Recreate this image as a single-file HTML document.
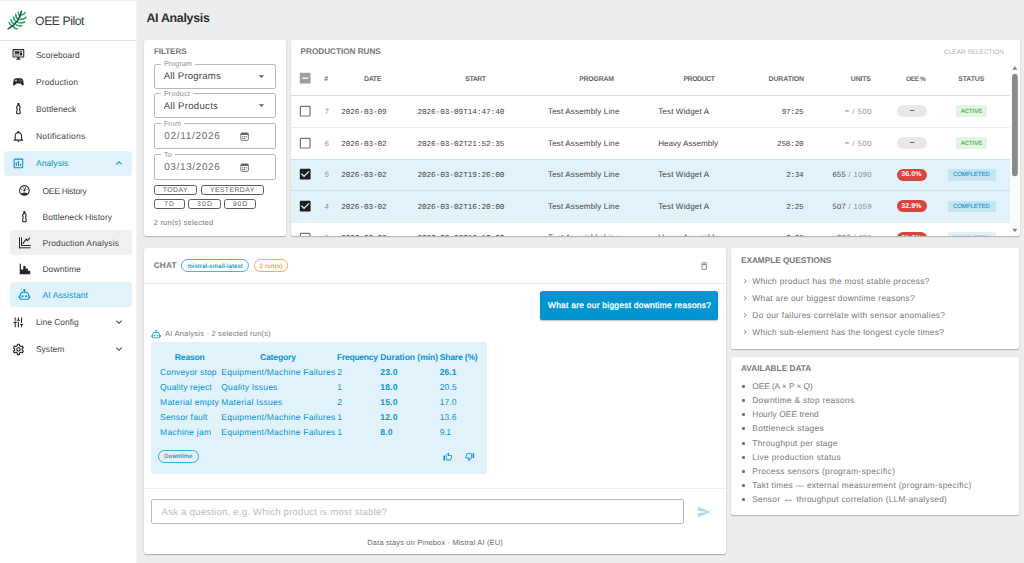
<!DOCTYPE html><html lang="en"><head><meta charset="utf-8"><title>OEE Pilot - AI Analysis</title><style>

*{box-sizing:border-box;margin:0;padding:0}
html,body{width:1024px;height:563px;overflow:hidden;background:#ededed}
body{font-family:"Liberation Sans",sans-serif;position:relative;text-rendering:geometricPrecision}
#app{position:absolute;left:0;top:0;width:1024px;height:563px;overflow:hidden;background:#ededed}
.b{position:absolute}
.i{position:absolute;display:block;overflow:visible}
.t{position:absolute;white-space:nowrap;line-height:1;font-weight:400}
.m{font-family:"Liberation Mono",monospace}
.card{background:#fff;border-radius:2.2px;box-shadow:0 1px 1.3px rgba(0,0,0,.27),0 0 .8px rgba(0,0,0,.07)}

</style></head><body><div id="app">
<nav class="b" style="left:0;top:0;width:137px;height:563px;background:#fff;border-right:1px solid #f4f4f4">
<div class="b" style="left:0;top:0;width:136px;height:1px;background:#f1f1f1"></div>
<div class="b" style="left:0;top:40px;width:136px;height:1px;background:#e2e2e2"></div>
<svg class="i" style="left:0;top:0;width:34px;height:34px" viewBox="0 0 34 34" fill="none" stroke-linecap="round">
<g stroke="#2daa6a" stroke-width="1.6">
<path d="M18.3 12.2Q18.4 15 20.2 16.3"/><path d="M15.7 14.4Q15.9 18.2 18.8 19.8"/><path d="M13.6 17Q13.9 20.6 17 22.2"/><path d="M11 19.5Q11.5 23 14.8 24.3"/><path d="M9.1 22.5Q9.8 25.2 12.6 26"/>
<path d="M21 15Q24.2 14.8 25.1 12.5"/><path d="M20.3 19.4Q23.8 19.6 25.9 17.4"/><path d="M18.6 22.5Q21.8 23.4 24.7 22.1"/><path d="M16.4 24.9Q19 26.4 21.9 25.7"/><path d="M13.3 26.7Q14.8 28.6 17.2 28.9"/>
</g>
<path d="M8.05 28.9C13 26.4 19.4 21.8 21.5 11.2" stroke="#2e3d55" stroke-width="1.45"/>
</svg>
<span class="t" style="left:35.10px;top:15px;font-size:12.2px;color:#3a3a3a;letter-spacing:-0.443px;">OEE Pilot</span>
<svg class="i" style="left:12.10px;top:48.00px;width:12.80px;height:12.80px;" viewBox="0 0 24 24"><path fill="#262626" d="M21,16V4H3V16H21M21,2A2,2 0 0,1 23,4V16A2,2 0 0,1 21,18H14V20H16V22H8V20H10V18H3C1.89,18 1,17.1 1,16V4C1,2.89 1.89,2 3,2H21M5,6H14V11H5V6M15,6H19V8H15V6M19,9V14H15V9H19M5,12H9V14H5V12M10,12H14V14H10V12Z"/></svg>
<span class="t" style="left:35.90px;top:51px;font-size:8.53px;color:#474747;letter-spacing:-0.010px;">Scoreboard</span>
<svg class="i" style="left:12.10px;top:75.20px;width:12.80px;height:12.80px;" viewBox="0 0 24 24"><path fill="#262626" d="M7.97,16L5,19C4.67,19.3 4.23,19.5 3.75,19.5A1.75,1.75 0 0,1 2,17.75V17.5L3,10.12C3.21,7.81 5.14,6 7.5,6H16.5C18.86,6 20.79,7.81 21,10.12L22,17.5V17.75A1.75,1.75 0 0,1 20.25,19.5C19.77,19.5 19.33,19.3 19,19L16.03,16H7.97M7,8V10H5V11H7V13H8V11H10V10H8V8H7M16.5,8A0.75,0.75 0 0,0 15.75,8.75A0.75,0.75 0 0,0 16.5,9.5A0.75,0.75 0 0,0 17.25,8.75A0.75,0.75 0 0,0 16.5,8M14.75,9.75A0.75,0.75 0 0,0 14,10.5A0.75,0.75 0 0,0 14.75,11.25A0.75,0.75 0 0,0 15.5,10.5A0.75,0.75 0 0,0 14.75,9.75M18.25,9.75A0.75,0.75 0 0,0 17.5,10.5A0.75,0.75 0 0,0 18.25,11.25A0.75,0.75 0 0,0 19,10.5A0.75,0.75 0 0,0 18.25,9.75M16.5,11.5A0.75,0.75 0 0,0 15.75,12.25A0.75,0.75 0 0,0 16.5,13A0.75,0.75 0 0,0 17.25,12.25A0.75,0.75 0 0,0 16.5,11.5Z"/></svg>
<span class="t" style="left:35.90px;top:78px;font-size:8.53px;color:#474747;letter-spacing:0.158px;">Production</span>
<svg class="i" style="left:12.10px;top:102.40px;width:12.80px;height:12.80px;" viewBox="0 0 24 24"><path fill-rule="evenodd" fill="#262626" d="M10.2,1.8H13.8V4.4C13.8,6.5 16.3,7.5 16.3,10.2C16.3,12 15.3,12.8 15.3,14.2C15.3,15.6 16.3,16.4 16.3,18V21A2,2 0 0 1 14.3,23H9.7A2,2 0 0 1 7.7,21V18C7.7,16.4 8.7,15.6 8.7,14.2C8.7,12.8 7.7,12 7.7,10.2C7.7,7.5 10.2,6.5 10.2,4.4ZM11.6,6.8H12.4C12.9,7.9 14.2,8.7 14.2,10.2C14.2,11.6 13.2,12.6 13.2,14.2C13.2,15.8 14.2,16.6 14.2,18V20.9H9.8V18C9.8,16.6 10.8,15.8 10.8,14.2C10.8,12.6 9.8,11.6 9.8,10.2C9.8,8.7 11.1,7.9 11.6,6.8Z"/></svg>
<span class="t" style="left:35.90px;top:105px;font-size:8.53px;color:#474747;letter-spacing:0.077px;">Bottleneck</span>
<svg class="i" style="left:12.10px;top:129.60px;width:12.80px;height:12.80px;" viewBox="0 0 24 24"><path fill="#262626" d="M10,21H14A2,2 0 0,1 12,23A2,2 0 0,1 10,21M21,19V20H3V19L5,17V11C5,7.9 7.03,5.17 10,4.29C10,4.19 10,4.1 10,4A2,2 0 0,1 12,2A2,2 0 0,1 14,4C14,4.1 14,4.19 14,4.29C16.97,5.17 19,7.9 19,11V17L21,19M17,11A5,5 0 0,0 12,6A5,5 0 0,0 7,11V18H17V11Z"/></svg>
<span class="t" style="left:35.90px;top:132px;font-size:8.53px;color:#474747;letter-spacing:0.256px;">Notifications</span>
<div class="b" style="left:3.80px;top:150.80px;width:128.20px;height:24.80px;background:#e1f2fa;border-radius:4px"></div>
<svg class="i" style="left:12.10px;top:156.80px;width:12.80px;height:12.80px;" viewBox="0 0 24 24"><path fill="#0394d2" d="M9,17H7V10H9V17M13,17H11V7H13V17M17,17H15V13H17V17M19,19H5V5H19V19.1M19,3H5C3.9,3 3,3.9 3,5V19C3,20.1 3.9,21 5,21H19C20.1,21 21,20.1 21,19V5C21,3.9 20.1,3 19,3Z"/></svg>
<span class="t" style="left:35.90px;top:159px;font-size:8.53px;color:#0394d2;letter-spacing:0.107px;">Analysis</span>
<svg class="i" style="left:112.90px;top:157.20px;width:12.00px;height:12.00px;" viewBox="0 0 24 24"><path fill="#0394d2" d="M7.41,15.41L12,10.83L16.59,15.41L18,14L12,8L6,14L7.41,15.41Z"/></svg>
<svg class="i" style="left:18.30px;top:184.40px;width:12.80px;height:12.80px;" viewBox="0 0 24 24"><path fill="#262626" d="M12,2A10,10 0 0,0 2,12A10,10 0 0,0 12,22A10,10 0 0,0 22,12A10,10 0 0,0 12,2M12,4A8,8 0 0,1 20,12C20,14.4 19,16.5 17.3,18C15.9,16.7 14,16 12,16C10,16 8.2,16.7 6.7,18C5,16.5 4,14.4 4,12A8,8 0 0,1 12,4M14,5.89C13.62,5.9 13.26,6.15 13.1,6.54L11.81,9.77L11.71,10C11,10.13 10.41,10.6 10.14,11.26C9.73,12.29 10.23,13.45 11.26,13.86C12.29,14.27 13.45,13.77 13.86,12.74C14.12,12.08 14,11.32 13.57,10.76L13.67,10.5L14.96,7.29L14.97,7.26C15.17,6.75 14.92,6.17 14.41,5.96C14.28,5.91 14.15,5.89 14,5.89M10,6A1,1 0 0,0 9,7A1,1 0 0,0 10,8A1,1 0 0,0 11,7A1,1 0 0,0 10,6M7,9A1,1 0 0,0 6,10A1,1 0 0,0 7,11A1,1 0 0,0 8,10A1,1 0 0,0 7,9M17,9A1,1 0 0,0 16,10A1,1 0 0,0 17,11A1,1 0 0,0 18,10A1,1 0 0,0 17,9Z"/></svg>
<span class="t" style="left:42.40px;top:187px;font-size:8.53px;color:#474747;letter-spacing:-0.249px;">OEE History</span>
<svg class="i" style="left:18.30px;top:210.30px;width:12.80px;height:12.80px;" viewBox="0 0 24 24"><path fill-rule="evenodd" fill="#262626" d="M10.2,1.8H13.8V4.4C13.8,6.5 16.3,7.5 16.3,10.2C16.3,12 15.3,12.8 15.3,14.2C15.3,15.6 16.3,16.4 16.3,18V21A2,2 0 0 1 14.3,23H9.7A2,2 0 0 1 7.7,21V18C7.7,16.4 8.7,15.6 8.7,14.2C8.7,12.8 7.7,12 7.7,10.2C7.7,7.5 10.2,6.5 10.2,4.4ZM11.6,6.8H12.4C12.9,7.9 14.2,8.7 14.2,10.2C14.2,11.6 13.2,12.6 13.2,14.2C13.2,15.8 14.2,16.6 14.2,18V20.9H9.8V18C9.8,16.6 10.8,15.8 10.8,14.2C10.8,12.6 9.8,11.6 9.8,10.2C9.8,8.7 11.1,7.9 11.6,6.8Z"/></svg>
<span class="t" style="left:42.40px;top:213px;font-size:8.53px;color:#474747;letter-spacing:0.061px;">Bottleneck History</span>
<div class="b" style="left:9.80px;top:230.20px;width:122.20px;height:24.80px;background:#f0f0f0;border-radius:4px"></div>
<svg class="i" style="left:18px;top:236px;width:14px;height:14px" viewBox="18 236 14 14"><g fill="#262626"><rect x="19" y="237.3" width="1" height="11"/><rect x="21" y="237.3" width="1" height="8.7"/><rect x="21" y="245" width="9.6" height="1"/><rect x="19" y="247.3" width="11.6" height="1"/></g><path d="M22.6,243.9L26.2,239.2L27.4,240.6L29.9,237.8" fill="none" stroke="#262626" stroke-width="1.15"/></svg>
<span class="t" style="left:42.40px;top:239px;font-size:8.53px;color:#474747;letter-spacing:0.125px;">Production Analysis</span>
<svg class="i" style="left:17.70px;top:261.50px;width:14.00px;height:14.00px;" viewBox="0 0 24 24"><path fill="#262626" d="M3,3H5V13H9V7H13V11H17V15H21V21H3V3Z"/></svg>
<span class="t" style="left:42.40px;top:265px;font-size:8.53px;color:#474747;letter-spacing:0.082px;">Downtime</span>
<div class="b" style="left:9.80px;top:282.00px;width:122.20px;height:24.80px;background:#e1f2fa;border-radius:4px"></div>
<svg class="i" style="left:18.30px;top:288.00px;width:12.80px;height:12.80px;" viewBox="0 0 24 24"><path fill="#0394d2" d="M17.5,15.5C17.5,16.61 16.61,17.5 15.5,17.5C14.39,17.5 13.5,16.61 13.5,15.5C13.5,14.39 14.4,13.5 15.5,13.5C16.6,13.5 17.5,14.4 17.5,15.5M8.5,13.5C7.4,13.5 6.5,14.4 6.5,15.5C6.5,16.6 7.4,17.5 8.5,17.5C9.6,17.5 10.5,16.61 10.5,15.5C10.5,14.39 9.61,13.5 8.5,13.5M23,15V18C23,18.55 22.55,19 22,19H21V20C21,21.11 20.11,22 19,22H5C3.9,22 3,21.11 3,20V19H2C1.45,19 1,18.55 1,18V15C1,14.45 1.45,14 2,14H3C3,10.13 6.13,7 10,7H11V5.73C10.4,5.39 10,4.74 10,4C10,2.9 10.9,2 12,2C13.1,2 14,2.9 14,4C14,4.74 13.6,5.39 13,5.73V7H14C17.87,7 21,10.13 21,14H22C22.55,14 23,14.45 23,15M21,16H19V14C19,11.24 16.76,9 14,9H10C7.24,9 5,11.24 5,14V16H3V17H5V20H19V17H21V16Z"/></svg>
<span class="t" style="left:42.40px;top:291px;font-size:8.53px;color:#0394d2;letter-spacing:0.098px;">AI Assistant</span>
<svg class="i" style="left:12.10px;top:315.60px;width:12.80px;height:12.80px;" viewBox="0 0 24 24"><path fill="#262626" d="M5,3H7V9H5ZM3,11H9V13H7V21H5V13H3ZM11,3H13V7H15V9H9V7H11ZM11,11H13V21H11ZM17,3H19V13H17ZM15,15H21V17H19V21H17V17H15Z"/></svg>
<span class="t" style="left:35.90px;top:318px;font-size:8.53px;color:#474747;letter-spacing:-0.035px;">Line Config</span>
<svg class="i" style="left:112.90px;top:316.00px;width:12.00px;height:12.00px;" viewBox="0 0 24 24"><path fill="#4c4c4c" d="M7.41,8.58L12,13.17L16.59,8.58L18,10L12,16L6,10L7.41,8.58Z"/></svg>
<svg class="i" style="left:12.10px;top:342.90px;width:12.80px;height:12.80px;" viewBox="0 0 24 24"><path d="M14.19,5.25L13.89,2.28L10.11,2.28L9.81,5.25L7.25,6.72L4.53,5.51L2.64,8.78L5.06,10.52L5.06,13.48L2.64,15.22L4.53,18.49L7.25,17.28L9.81,18.75L10.11,21.72L13.89,21.72L14.19,18.75L16.75,17.28L19.47,18.49L21.36,15.22L18.94,13.48L18.94,10.52L21.36,8.78L19.47,5.51L16.75,6.72Z" fill="none" stroke="#262626" stroke-width="2.05" stroke-linejoin="round"/><circle cx="12" cy="12" r="3.1" fill="none" stroke="#262626" stroke-width="2.05"/></svg>
<span class="t" style="left:35.90px;top:345px;font-size:8.53px;color:#474747;letter-spacing:0.021px;">System</span>
<svg class="i" style="left:112.90px;top:343.30px;width:12.00px;height:12.00px;" viewBox="0 0 24 24"><path fill="#4c4c4c" d="M7.41,8.58L12,13.17L16.59,8.58L18,10L12,16L6,10L7.41,8.58Z"/></svg>
</nav>
<main>
<span class="t" style="left:146.40px;top:12px;font-size:12.4px;color:#2f2f2f;font-weight:700;letter-spacing:-0.295px;">AI Analysis</span>
<div class="b card" style="left:144.00px;top:40.20px;width:142.10px;height:195.60px;"></div>
<span class="t" style="left:153.90px;top:48px;font-size:8.1px;color:#787878;font-weight:700;letter-spacing:-0.071px;">FILTERS</span>
<div class="b" style="left:154.00px;top:64.00px;width:121.60px;height:25.00px;border:1px solid #b9b9b9;border-radius:2.2px"></div>
<div class="b" style="left:161.00px;top:63.00px;width:34.10px;height:3.00px;background:#fff"></div>
<span class="t" style="left:163.90px;top:60px;font-size:7.2px;color:#8c8c8c;letter-spacing:0.088px;">Program</span>
<div class="b" style="left:154.00px;top:93.00px;width:121.60px;height:25.00px;border:1px solid #b9b9b9;border-radius:2.2px"></div>
<div class="b" style="left:161.00px;top:92.00px;width:31.90px;height:3.00px;background:#fff"></div>
<span class="t" style="left:163.90px;top:90px;font-size:7.2px;color:#8c8c8c;letter-spacing:0.188px;">Product</span>
<div class="b" style="left:154.00px;top:123.00px;width:121.60px;height:26.00px;border:1px solid #b9b9b9;border-radius:2.2px"></div>
<div class="b" style="left:161.00px;top:122.00px;width:23.00px;height:3.00px;background:#fff"></div>
<span class="t" style="left:163.90px;top:120px;font-size:7.2px;color:#8c8c8c;letter-spacing:0.073px;">From</span>
<div class="b" style="left:154.00px;top:154.00px;width:121.60px;height:26.00px;border:1px solid #b9b9b9;border-radius:2.2px"></div>
<div class="b" style="left:161.00px;top:153.00px;width:13.80px;height:3.00px;background:#fff"></div>
<span class="t" style="left:163.90px;top:151px;font-size:7.2px;color:#8c8c8c;letter-spacing:0.208px;">To</span>
<span class="t" style="left:163.70px;top:72px;font-size:9.6px;color:#454545;letter-spacing:0.199px;">All Programs</span>
<span class="t" style="left:163.70px;top:102px;font-size:9.6px;color:#454545;letter-spacing:0.274px;">All Products</span>
<svg class="i" style="left:254.50px;top:69.70px;width:12.80px;height:12.80px;" viewBox="0 0 24 24"><path fill="#5f5f5f" d="M7,10L12,15L17,10H7Z"/></svg>
<svg class="i" style="left:254.50px;top:99.30px;width:12.80px;height:12.80px;" viewBox="0 0 24 24"><path fill="#5f5f5f" d="M7,10L12,15L17,10H7Z"/></svg>
<span class="t" style="left:164.20px;top:132px;font-size:10.0px;color:#6d6d6d;letter-spacing:0.706px;">02/11/2026</span>
<span class="t" style="left:164.20px;top:163px;font-size:10.0px;color:#6d6d6d;letter-spacing:0.624px;">03/13/2026</span>
<svg class="i" style="left:240px;top:131.80px;width:9.2px;height:9.2px" viewBox="0 0 18 18"><rect x="1.6" y="1.8" width="14.8" height="14.6" rx="2.6" fill="none" stroke="#666" stroke-width="1.7"/><rect x="1.6" y="1.8" width="14.8" height="4.2" rx="1.6" fill="#666"/><rect x="4.3" y="8.3" width="2.4" height="2.2" fill="#666"/><rect x="7.8" y="8.3" width="2.4" height="2.2" fill="#666"/><rect x="11.3" y="8.3" width="2.4" height="2.2" fill="#666"/><rect x="4.3" y="11.8" width="2.4" height="2.2" fill="#666"/><rect x="7.8" y="11.8" width="2.4" height="2.2" fill="#666"/></svg>
<svg class="i" style="left:240px;top:162.60px;width:9.2px;height:9.2px" viewBox="0 0 18 18"><rect x="1.6" y="1.8" width="14.8" height="14.6" rx="2.6" fill="none" stroke="#666" stroke-width="1.7"/><rect x="1.6" y="1.8" width="14.8" height="4.2" rx="1.6" fill="#666"/><rect x="4.3" y="8.3" width="2.4" height="2.2" fill="#666"/><rect x="7.8" y="8.3" width="2.4" height="2.2" fill="#666"/><rect x="11.3" y="8.3" width="2.4" height="2.2" fill="#666"/><rect x="4.3" y="11.8" width="2.4" height="2.2" fill="#666"/><rect x="7.8" y="11.8" width="2.4" height="2.2" fill="#666"/></svg>
<div class="b" style="left:153.50px;top:185.00px;width:43.60px;height:10.00px;border:1px solid #5c5c5c;border-radius:2.6px"></div>
<span class="t" style="left:162.65px;top:188px;font-size:6.9px;color:#606060;letter-spacing:0.449px;">TODAY</span>
<div class="b" style="left:200.80px;top:185.00px;width:63.00px;height:10.00px;border:1px solid #5c5c5c;border-radius:2.6px"></div>
<span class="t" style="left:209.90px;top:188px;font-size:6.9px;color:#606060;letter-spacing:0.396px;">YESTERDAY</span>
<div class="b" style="left:153.50px;top:199.00px;width:31.20px;height:10.00px;border:1px solid #5c5c5c;border-radius:2.6px"></div>
<span class="t" style="left:164.30px;top:202px;font-size:6.9px;color:#606060;letter-spacing:0.768px;">7D</span>
<div class="b" style="left:188.30px;top:199.00px;width:32.30px;height:10.00px;border:1px solid #5c5c5c;border-radius:2.6px"></div>
<span class="t" style="left:196.95px;top:202px;font-size:6.9px;color:#606060;letter-spacing:1.168px;">30D</span>
<div class="b" style="left:224.20px;top:199.00px;width:31.80px;height:10.00px;border:1px solid #5c5c5c;border-radius:2.6px"></div>
<span class="t" style="left:232.90px;top:202px;font-size:6.9px;color:#606060;letter-spacing:0.868px;">90D</span>
<span class="t" style="left:153.70px;top:219px;font-size:7.47px;color:#777;letter-spacing:0.233px;">2 run(s) selected</span>
<section class="b card" style="left:291px;top:40.2px;width:728.5px;height:195.6px;overflow:hidden">
</section>
<span class="t" style="left:300.60px;top:48px;font-size:8.2px;color:#787878;font-weight:700;letter-spacing:-0.025px;">PRODUCTION RUNS</span>
<span class="t" style="left:944.10px;top:50px;font-size:6.4px;color:#b3b3b3;letter-spacing:0.036px;">CLEAR SELECTION</span>
<div class="b" style="left:291px;top:62px;width:728.5px;height:173.8px;overflow:hidden;border-radius:0 0 2.2px 2.2px">
<div class="b" style="left:0.00px;top:97.00px;width:719.10px;height:63.00px;background:#e1f2fa"></div>
<div class="b" style="left:0.00px;top:32.80px;width:719.10px;height:1.00px;background:#dcdcdc"></div>
<div class="b" style="left:0.00px;top:65.00px;width:719.10px;height:1.00px;background:rgba(0,0,0,.075)"></div>
<div class="b" style="left:0.00px;top:97.00px;width:719.10px;height:1.00px;background:rgba(0,0,0,.075)"></div>
<div class="b" style="left:0.00px;top:128.00px;width:719.10px;height:1.00px;background:rgba(0,0,0,.075)"></div>
<div class="b" style="left:0.00px;top:160.00px;width:719.10px;height:1.00px;background:rgba(0,0,0,.075)"></div>
</div>
<span class="t" style="left:324.20px;top:77px;font-size:6.9px;color:#666;font-weight:700;">#</span>
<span class="t" style="left:364.10px;top:77px;font-size:6.9px;color:#666;font-weight:700;letter-spacing:-0.350px;">DATE</span>
<span class="t" style="left:465.30px;top:77px;font-size:6.9px;color:#666;font-weight:700;letter-spacing:-0.436px;">START</span>
<span class="t" style="left:579.20px;top:77px;font-size:6.9px;color:#666;font-weight:700;letter-spacing:-0.207px;">PROGRAM</span>
<span class="t" style="left:683.40px;top:77px;font-size:6.9px;color:#666;font-weight:700;letter-spacing:-0.410px;">PRODUCT</span>
<span class="t" style="left:768.50px;top:77px;font-size:6.9px;color:#666;font-weight:700;letter-spacing:-0.039px;">DURATION</span>
<span class="t" style="left:850.80px;top:77px;font-size:6.9px;color:#666;font-weight:700;letter-spacing:-0.144px;">UNITS</span>
<span class="t" style="left:906.00px;top:77px;font-size:6.5px;color:#666;font-weight:700;letter-spacing:-0.358px;">OEE %</span>
<span class="t" style="left:958.20px;top:77px;font-size:6.9px;color:#666;font-weight:700;letter-spacing:-0.088px;">STATUS</span>
<svg class="i" style="left:298.30px;top:71.30px;width:14.40px;height:14.40px;" viewBox="0 0 24 24"><path fill="#9e9e9e" d="M17,13H7V11H17M19,3H5C3.89,3 3,3.89 3,5V19A2,2 0 0,0 5,21H19A2,2 0 0,0 21,19V5C21,3.89 20.1,3 19,3Z"/></svg>
<div class="b" style="left:291px;top:62px;width:728.5px;height:173.8px;overflow:hidden">
<div class="b" style="left:-291px;top:-62px;width:1024px;height:563px">
<svg class="i" style="left:298.30px;top:104.00px;width:14.40px;height:14.40px;" viewBox="0 0 24 24"><path fill="#747474" d="M19,3H5C3.89,3 3,3.89 3,5V19A2,2 0 0,0 5,21H19A2,2 0 0,0 21,19V5C21,3.89 20.1,3 19,3M19,5V19H5V5H19Z"/></svg>
<span class="t" style="left:324.70px;top:108px;font-size:7.47px;color:#909090;">7</span>
<span class="t m" style="left:341.30px;top:110px;font-size:7.73px;color:#444;letter-spacing:-0.110px;">2026-03-09</span>
<span class="t m" style="left:417.40px;top:110px;font-size:7.73px;color:#444;letter-spacing:-0.054px;">2026-03-09T14:47:40</span>
<span class="t" style="left:548.00px;top:108px;font-size:8.1px;color:#444;letter-spacing:0.131px;">Test Assembly Line</span>
<span class="t" style="left:658.20px;top:108px;font-size:8.1px;color:#444;letter-spacing:0.118px;">Test Widget A</span>
<span class="t m" style="left:781.64px;top:110px;font-size:7.73px;color:#444;letter-spacing:-0.267px;">97:25</span>
<span class="t" style="left:844.90px;top:108px;font-size:7.6px;color:#8c8c8c;letter-spacing:0.567px;"><b style="position:relative;top:-1px;font-weight:700;color:#555">–</b> / 500</span>
<div class="b" style="left:896.90px;top:105.10px;width:30.00px;height:12.20px;background:#e9e9e9;border-radius:6.1px"></div>
<span class="t" style="left:909.40px;top:106px;font-size:9.0px;color:#5a5a5a;font-weight:700;">–</span>
<div class="b" style="left:956.20px;top:105.20px;width:30.90px;height:12.20px;background:#e3f3e4;border-radius:2px"></div>
<span class="t" style="left:960.85px;top:109px;font-size:6.0px;color:#4caf50;letter-spacing:-0.034px;-webkit-text-stroke:.14px #4caf50;">ACTIVE</span>
<svg class="i" style="left:298.30px;top:135.90px;width:14.40px;height:14.40px;" viewBox="0 0 24 24"><path fill="#747474" d="M19,3H5C3.89,3 3,3.89 3,5V19A2,2 0 0,0 5,21H19A2,2 0 0,0 21,19V5C21,3.89 20.1,3 19,3M19,5V19H5V5H19Z"/></svg>
<span class="t" style="left:324.70px;top:140px;font-size:7.47px;color:#909090;">6</span>
<span class="t m" style="left:341.30px;top:142px;font-size:7.73px;color:#444;letter-spacing:-0.110px;">2026-03-02</span>
<span class="t m" style="left:417.40px;top:142px;font-size:7.73px;color:#444;letter-spacing:-0.054px;">2026-03-02T21:52:35</span>
<span class="t" style="left:548.00px;top:140px;font-size:8.1px;color:#444;letter-spacing:0.131px;">Test Assembly Line</span>
<span class="t" style="left:658.20px;top:140px;font-size:8.1px;color:#444;letter-spacing:0.009px;">Heavy Assembly</span>
<span class="t m" style="left:777.00px;top:142px;font-size:7.73px;color:#444;letter-spacing:-0.212px;">258:20</span>
<span class="t" style="left:844.90px;top:140px;font-size:7.6px;color:#8c8c8c;letter-spacing:0.567px;"><b style="position:relative;top:-1px;font-weight:700;color:#555">–</b> / 500</span>
<div class="b" style="left:896.90px;top:137.00px;width:30.00px;height:12.20px;background:#e9e9e9;border-radius:6.1px"></div>
<span class="t" style="left:909.40px;top:138px;font-size:9.0px;color:#5a5a5a;font-weight:700;">–</span>
<div class="b" style="left:956.20px;top:137.10px;width:30.90px;height:12.20px;background:#e3f3e4;border-radius:2px"></div>
<span class="t" style="left:960.85px;top:141px;font-size:6.0px;color:#4caf50;letter-spacing:-0.034px;-webkit-text-stroke:.14px #4caf50;">ACTIVE</span>
<svg class="i" style="left:298.30px;top:167.40px;width:14.40px;height:14.40px;" viewBox="0 0 24 24"><path fill="#1f1f1f" d="M10,17L5,12L6.41,10.58L10,14.17L17.59,6.58L19,8M19,3H5C3.89,3 3,3.89 3,5V19A2,2 0 0,0 5,21H19A2,2 0 0,0 21,19V5C21,3.89 20.1,3 19,3Z"/></svg>
<span class="t" style="left:324.70px;top:171px;font-size:7.47px;color:#909090;">5</span>
<span class="t m" style="left:341.30px;top:173px;font-size:7.73px;color:#444;letter-spacing:-0.110px;">2026-03-02</span>
<span class="t m" style="left:417.40px;top:173px;font-size:7.73px;color:#444;letter-spacing:-0.054px;">2026-03-02T19:26:00</span>
<span class="t" style="left:548.00px;top:171px;font-size:8.1px;color:#444;letter-spacing:0.131px;">Test Assembly Line</span>
<span class="t" style="left:658.20px;top:171px;font-size:8.1px;color:#444;letter-spacing:0.118px;">Test Widget A</span>
<span class="t m" style="left:786.28px;top:173px;font-size:7.73px;color:#444;letter-spacing:-0.359px;">2:34</span>
<span class="t" style="left:832.40px;top:171px;font-size:7.6px;color:#8c8c8c;letter-spacing:0.359px;"><b style="font-weight:400;color:#444">655</b> / 1090</span>
<div class="b" style="left:896.90px;top:168.50px;width:30.00px;height:12.20px;background:#d8453a;border-radius:6.1px"></div>
<span class="t" style="left:901.25px;top:171px;font-size:7.0px;color:#fff;font-weight:700;letter-spacing:0.069px;">36.0%</span>
<div class="b" style="left:948.00px;top:169.00px;width:47.50px;height:11.80px;background:#c5e4f4;border-radius:2px"></div>
<span class="t" style="left:953.05px;top:172px;font-size:6.0px;color:#1f97d4;letter-spacing:-0.113px;-webkit-text-stroke:.14px #1f97d4;">COMPLETED</span>
<svg class="i" style="left:298.30px;top:199.00px;width:14.40px;height:14.40px;" viewBox="0 0 24 24"><path fill="#1f1f1f" d="M10,17L5,12L6.41,10.58L10,14.17L17.59,6.58L19,8M19,3H5C3.89,3 3,3.89 3,5V19A2,2 0 0,0 5,21H19A2,2 0 0,0 21,19V5C21,3.89 20.1,3 19,3Z"/></svg>
<span class="t" style="left:324.70px;top:203px;font-size:7.47px;color:#909090;">4</span>
<span class="t m" style="left:341.30px;top:205px;font-size:7.73px;color:#444;letter-spacing:-0.110px;">2026-03-02</span>
<span class="t m" style="left:417.40px;top:205px;font-size:7.73px;color:#444;letter-spacing:-0.054px;">2026-03-02T16:20:00</span>
<span class="t" style="left:548.00px;top:203px;font-size:8.1px;color:#444;letter-spacing:0.131px;">Test Assembly Line</span>
<span class="t" style="left:658.20px;top:203px;font-size:8.1px;color:#444;letter-spacing:0.118px;">Test Widget A</span>
<span class="t m" style="left:786.28px;top:205px;font-size:7.73px;color:#444;letter-spacing:-0.359px;">2:25</span>
<span class="t" style="left:832.40px;top:203px;font-size:7.6px;color:#8c8c8c;letter-spacing:0.359px;"><b style="font-weight:400;color:#444">507</b> / 1059</span>
<div class="b" style="left:896.90px;top:200.10px;width:30.00px;height:12.20px;background:#d8453a;border-radius:6.1px"></div>
<span class="t" style="left:901.25px;top:203px;font-size:7.0px;color:#fff;font-weight:700;letter-spacing:0.069px;">32.9%</span>
<div class="b" style="left:948.00px;top:200.60px;width:47.50px;height:11.80px;background:#c5e4f4;border-radius:2px"></div>
<span class="t" style="left:953.05px;top:204px;font-size:6.0px;color:#1f97d4;letter-spacing:-0.113px;-webkit-text-stroke:.14px #1f97d4;">COMPLETED</span>
<svg class="i" style="left:298.30px;top:230.50px;width:14.40px;height:14.40px;" viewBox="0 0 24 24"><path fill="#747474" d="M19,3H5C3.89,3 3,3.89 3,5V19A2,2 0 0,0 5,21H19A2,2 0 0,0 21,19V5C21,3.89 20.1,3 19,3M19,5V19H5V5H19Z"/></svg>
<span class="t" style="left:324.70px;top:234px;font-size:7.47px;color:#909090;">3</span>
<span class="t m" style="left:341.30px;top:236px;font-size:7.73px;color:#444;letter-spacing:-0.110px;">2026-03-02</span>
<span class="t m" style="left:417.40px;top:236px;font-size:7.73px;color:#444;letter-spacing:-0.054px;">2026-03-02T13:16:00</span>
<span class="t" style="left:548.00px;top:234px;font-size:8.1px;color:#444;letter-spacing:0.131px;">Test Assembly Line</span>
<span class="t" style="left:658.20px;top:234px;font-size:8.1px;color:#444;letter-spacing:0.009px;">Heavy Assembly</span>
<span class="t m" style="left:786.28px;top:236px;font-size:7.73px;color:#444;letter-spacing:-0.359px;">0:28</span>
<span class="t" style="left:836.90px;top:234px;font-size:7.6px;color:#8c8c8c;letter-spacing:0.369px;"><b style="font-weight:400;color:#444">207</b> / 421</span>
<div class="b" style="left:896.90px;top:231.60px;width:30.00px;height:12.20px;background:#d8453a;border-radius:6.1px"></div>
<span class="t" style="left:901.25px;top:235px;font-size:7.0px;color:#fff;font-weight:700;letter-spacing:0.069px;">31.6%</span>
<div class="b" style="left:948.00px;top:232.10px;width:47.50px;height:11.80px;background:#dff0f9;border-radius:2px"></div>
<span class="t" style="left:953.05px;top:236px;font-size:6.0px;color:#1f97d4;letter-spacing:-0.113px;-webkit-text-stroke:.14px #1f97d4;">COMPLETED</span>
</div></div>
<div class="b" style="left:1010.10px;top:62.00px;width:9.40px;height:173.80px;background:#fcfcfc;border-radius:0 0 2.2px 0"></div>
<svg class="i" style="left:1010.1px;top:62px;width:9.4px;height:173.8px" viewBox="0 0 9.4 173.8"><path d="M2.3 7.7L4.85 3.9L7.4 7.7Z" fill="#858585"/><path d="M2.3 166.9L4.85 170.4L7.4 166.9Z" fill="#858585"/><rect x="2.0" y="11.7" width="5.8" height="102.6" rx="2.9" fill="#8a8a8a"/></svg>
<section class="b card" style="left:144px;top:248.2px;width:581.7px;height:305.6px"></section>
<span class="t" style="left:153.70px;top:262px;font-size:8.2px;color:#787878;font-weight:700;letter-spacing:0.223px;">CHAT</span>
<div class="b" style="left:181.00px;top:259.10px;width:68.40px;height:12.70px;border:1px solid rgba(3,148,210,.72);border-radius:6.4px"></div>
<span class="t" style="left:187.50px;top:264px;font-size:6.2px;color:#0394d2;letter-spacing:0.198px;-webkit-text-stroke:.12px #0394d2;">mistral-small-latest</span>
<div class="b" style="left:253.90px;top:259.10px;width:34.00px;height:12.70px;border:1px solid rgba(245,150,50,.8);border-radius:6.4px"></div>
<span class="t" style="left:259.50px;top:264px;font-size:6.2px;color:#f2922c;letter-spacing:0.206px;-webkit-text-stroke:.12px #f2922c;">2 run(s)</span>
<svg class="i" style="left:698.50px;top:260.70px;width:10.40px;height:10.40px;" viewBox="0 0 24 24"><path fill="#838383" d="M6,19A2,2 0 0,0 8,21H16A2,2 0 0,0 18,19V7H6V19M8,9H16V19H8V9M15.5,4L14.5,3H9.5L8.5,4H5V6H19V4H15.5Z"/></svg>
<div class="b" style="left:144.00px;top:282.60px;width:581.70px;height:0.90px;background:#e9e9e9"></div>
<div class="b" style="left:540.40px;top:290.80px;width:178.10px;height:29.30px;background:#0394d2;border-radius:2.6px;box-shadow:0 1px 1.5px rgba(0,0,0,.25)"></div>
<span class="t" style="left:548.00px;top:301px;font-size:8.4px;color:#fff;letter-spacing:0.275px;-webkit-text-stroke:.3px #fff;">What are our biggest downtime reasons?</span>
<svg class="i" style="left:151.10px;top:328.50px;width:10.20px;height:10.20px;" viewBox="0 0 24 24"><path fill="#0394d2" d="M17.5,15.5C17.5,16.61 16.61,17.5 15.5,17.5C14.39,17.5 13.5,16.61 13.5,15.5C13.5,14.39 14.4,13.5 15.5,13.5C16.6,13.5 17.5,14.4 17.5,15.5M8.5,13.5C7.4,13.5 6.5,14.4 6.5,15.5C6.5,16.6 7.4,17.5 8.5,17.5C9.6,17.5 10.5,16.61 10.5,15.5C10.5,14.39 9.61,13.5 8.5,13.5M23,15V18C23,18.55 22.55,19 22,19H21V20C21,21.11 20.11,22 19,22H5C3.9,22 3,21.11 3,20V19H2C1.45,19 1,18.55 1,18V15C1,14.45 1.45,14 2,14H3C3,10.13 6.13,7 10,7H11V5.73C10.4,5.39 10,4.74 10,4C10,2.9 10.9,2 12,2C13.1,2 14,2.9 14,4C14,4.74 13.6,5.39 13,5.73V7H14C17.87,7 21,10.13 21,14H22C22.55,14 23,14.45 23,15M21,16H19V14C19,11.24 16.76,9 14,9H10C7.24,9 5,11.24 5,14V16H3V17H5V20H19V17H21V16Z"/></svg>
<span class="t" style="left:165.00px;top:330px;font-size:7.47px;color:#777;letter-spacing:0.233px;">AI Analysis · 2 selected run(s)</span>
<div class="b" style="left:151.30px;top:342.40px;width:335.70px;height:131.60px;background:#e1f2fa;border-radius:2.6px"></div>
<span class="t" style="left:174.85px;top:353px;font-size:8.53px;color:#0394d2;font-weight:700;letter-spacing:-0.172px;">Reason</span>
<span class="t" style="left:260.03px;top:353px;font-size:8.53px;color:#0394d2;font-weight:700;letter-spacing:-0.146px;">Category</span>
<span class="t" style="left:337.00px;top:353px;font-size:8.53px;color:#0394d2;font-weight:700;letter-spacing:-0.266px;">Frequency</span>
<span class="t" style="left:380.20px;top:353px;font-size:8.53px;color:#0394d2;font-weight:700;letter-spacing:-0.027px;">Duration (min)</span>
<span class="t" style="left:439.70px;top:353px;font-size:8.53px;color:#0394d2;font-weight:700;letter-spacing:-0.168px;">Share (%)</span>
<span class="t" style="left:160.10px;top:368px;font-size:8.53px;color:#0394d2;letter-spacing:0.127px;">Conveyor stop</span>
<span class="t" style="left:221.25px;top:368px;font-size:8.53px;color:#0394d2;letter-spacing:0.242px;">Equipment/Machine Failures</span>
<span class="t" style="left:337.20px;top:368px;font-size:8.53px;color:#0394d2;">2</span>
<span class="t" style="left:380.20px;top:368px;font-size:8.53px;color:#0394d2;font-weight:700;letter-spacing:0.221px;">23.0</span>
<span class="t" style="left:439.70px;top:368px;font-size:8.53px;color:#0394d2;font-weight:700;letter-spacing:0.054px;">26.1</span>
<span class="t" style="left:160.10px;top:383px;font-size:8.53px;color:#0394d2;letter-spacing:0.144px;">Quality reject</span>
<span class="t" style="left:221.25px;top:383px;font-size:8.53px;color:#0394d2;letter-spacing:0.202px;">Quality Issues</span>
<span class="t" style="left:337.20px;top:383px;font-size:8.53px;color:#0394d2;">1</span>
<span class="t" style="left:380.20px;top:383px;font-size:8.53px;color:#0394d2;font-weight:700;letter-spacing:0.221px;">18.0</span>
<span class="t" style="left:439.70px;top:383px;font-size:8.53px;color:#0394d2;letter-spacing:0.154px;">20.5</span>
<span class="t" style="left:160.10px;top:398px;font-size:8.53px;color:#0394d2;letter-spacing:0.217px;">Material empty</span>
<span class="t" style="left:221.25px;top:398px;font-size:8.53px;color:#0394d2;letter-spacing:0.267px;">Material Issues</span>
<span class="t" style="left:337.20px;top:398px;font-size:8.53px;color:#0394d2;">2</span>
<span class="t" style="left:380.20px;top:398px;font-size:8.53px;color:#0394d2;font-weight:700;letter-spacing:0.221px;">15.0</span>
<span class="t" style="left:439.70px;top:398px;font-size:8.53px;color:#0394d2;letter-spacing:0.054px;">17.0</span>
<span class="t" style="left:160.10px;top:413px;font-size:8.53px;color:#0394d2;letter-spacing:0.166px;">Sensor fault</span>
<span class="t" style="left:221.25px;top:413px;font-size:8.53px;color:#0394d2;letter-spacing:0.242px;">Equipment/Machine Failures</span>
<span class="t" style="left:337.20px;top:413px;font-size:8.53px;color:#0394d2;">1</span>
<span class="t" style="left:380.20px;top:413px;font-size:8.53px;color:#0394d2;font-weight:700;letter-spacing:0.221px;">12.0</span>
<span class="t" style="left:439.70px;top:413px;font-size:8.53px;color:#0394d2;letter-spacing:0.054px;">13.6</span>
<span class="t" style="left:160.10px;top:428px;font-size:8.53px;color:#0394d2;letter-spacing:0.262px;">Machine jam</span>
<span class="t" style="left:221.25px;top:428px;font-size:8.53px;color:#0394d2;letter-spacing:0.242px;">Equipment/Machine Failures</span>
<span class="t" style="left:337.20px;top:428px;font-size:8.53px;color:#0394d2;">1</span>
<span class="t" style="left:380.20px;top:428px;font-size:8.53px;color:#0394d2;font-weight:700;letter-spacing:0.199px;">8.0</span>
<span class="t" style="left:439.70px;top:428px;font-size:8.53px;color:#0394d2;letter-spacing:-0.301px;">9.1</span>
<div class="b" style="left:158.20px;top:450.10px;width:40.80px;height:12.50px;border:1px solid rgba(3,148,210,.75);border-radius:6.3px"></div>
<span class="t" style="left:164.00px;top:454px;font-size:6.0px;color:#0394d2;letter-spacing:0.252px;-webkit-text-stroke:.12px #0394d2;">Downtime</span>
<svg class="i" style="left:442.50px;top:451.60px;width:9.60px;height:9.60px;" viewBox="0 0 24 24"><path fill="#0394d2" d="M5,9V21H1V9H5M9,21A2,2 0 0,1 7,19V9C7,8.45 7.22,7.95 7.59,7.59L14.17,1L15.23,2.06C15.5,2.33 15.67,2.7 15.67,3.11L15.64,3.43L14.69,8H21C22.11,8 23,8.9 23,10V12C23,12.26 22.95,12.5 22.86,12.73L19.84,19.78C19.54,20.5 18.83,21 18,21H9M9,19H18.03L21,12V10H12.21L13.34,4.68L9,9.03V19Z"/></svg>
<svg class="i" style="left:464.90px;top:451.80px;width:9.60px;height:9.60px;" viewBox="0 0 24 24"><path fill="#0394d2" d="M19,15V3H23V15H19M15,3A2,2 0 0,1 17,5V15C17,15.55 16.78,16.05 16.41,16.41L9.83,23L8.77,21.94C8.5,21.67 8.33,21.3 8.33,20.88L8.36,20.57L9.31,16H3C1.89,16 1,15.1 1,14V12C1,11.74 1.05,11.5 1.14,11.27L4.16,4.22C4.46,3.5 5.17,3 6,3H15M15,5H5.97L3,12V14H11.78L10.65,19.32L15,14.97V5Z"/></svg>
<div class="b" style="left:144.00px;top:487.80px;width:581.70px;height:0.90px;background:#efefef"></div>
<div class="b" style="left:151.30px;top:499.30px;width:532.70px;height:24.50px;border:1px solid #b9b9b9;border-radius:2.2px"></div>
<span class="t" style="left:161.60px;top:508px;font-size:9.6px;color:#bdbdbd;letter-spacing:0.213px;">Ask a question, e.g. Which product is most stable?</span>
<svg class="i" style="left:697.00px;top:504.60px;width:14.00px;height:14.00px;" viewBox="0 0 24 24"><path fill="#a5d8ef" d="M2,21L23,12L2,3V10L17,12L2,14V21Z"/></svg>
<span class="t" style="left:367.30px;top:539px;font-size:7.47px;color:#6a6a6a;letter-spacing:0.155px;">Data stays on Pinebox · Mistral AI (EU)</span>
<section class="b card" style="left:731.2px;top:248.2px;width:288.3px;height:100.6px"></section>
<span class="t" style="left:741.00px;top:257px;font-size:8.2px;color:#787878;font-weight:700;letter-spacing:0.012px;">EXAMPLE QUESTIONS</span>
<svg class="i" style="left:740.90px;top:277.00px;width:8.40px;height:8.40px;" viewBox="0 0 24 24"><path fill="#7c7c7c" d="M8.59,16.58L13.17,12L8.59,7.41L10,6L16,12L10,18L8.59,16.58Z"/></svg>
<span class="t" style="left:752.30px;top:277px;font-size:8.4px;color:#777;letter-spacing:0.302px;">Which product has the most stable process?</span>
<svg class="i" style="left:740.90px;top:294.00px;width:8.40px;height:8.40px;" viewBox="0 0 24 24"><path fill="#7c7c7c" d="M8.59,16.58L13.17,12L8.59,7.41L10,6L16,12L10,18L8.59,16.58Z"/></svg>
<span class="t" style="left:752.30px;top:294px;font-size:8.4px;color:#777;letter-spacing:0.261px;">What are our biggest downtime reasons?</span>
<svg class="i" style="left:740.90px;top:311.20px;width:8.40px;height:8.40px;" viewBox="0 0 24 24"><path fill="#7c7c7c" d="M8.59,16.58L13.17,12L8.59,7.41L10,6L16,12L10,18L8.59,16.58Z"/></svg>
<span class="t" style="left:752.30px;top:311px;font-size:8.4px;color:#777;letter-spacing:0.286px;">Do our failures correlate with sensor anomalies?</span>
<svg class="i" style="left:740.90px;top:328.20px;width:8.40px;height:8.40px;" viewBox="0 0 24 24"><path fill="#7c7c7c" d="M8.59,16.58L13.17,12L8.59,7.41L10,6L16,12L10,18L8.59,16.58Z"/></svg>
<span class="t" style="left:752.30px;top:328px;font-size:8.4px;color:#777;letter-spacing:0.274px;">Which sub-element has the longest cycle times?</span>
<section class="b card" style="left:731.2px;top:357.1px;width:288.3px;height:157.6px"></section>
<span class="t" style="left:741.00px;top:365px;font-size:8.2px;color:#787878;font-weight:700;letter-spacing:0.060px;">AVAILABLE DATA</span>
<div class="b" style="left:742.40px;top:385.20px;width:2.40px;height:2.40px;background:#707070;border-radius:50%"></div>
<span class="t" style="left:752.30px;top:382px;font-size:8.3px;color:#777;letter-spacing:-0.058px;">OEE (A × P × Q)</span>
<div class="b" style="left:742.40px;top:399.20px;width:2.40px;height:2.40px;background:#707070;border-radius:50%"></div>
<span class="t" style="left:752.30px;top:396px;font-size:8.3px;color:#777;letter-spacing:0.328px;">Downtime &amp; stop reasons</span>
<div class="b" style="left:742.40px;top:413.20px;width:2.40px;height:2.40px;background:#707070;border-radius:50%"></div>
<span class="t" style="left:752.30px;top:410px;font-size:8.3px;color:#777;letter-spacing:0.093px;">Hourly OEE trend</span>
<div class="b" style="left:742.40px;top:427.20px;width:2.40px;height:2.40px;background:#707070;border-radius:50%"></div>
<span class="t" style="left:752.30px;top:424px;font-size:8.3px;color:#777;letter-spacing:0.372px;">Bottleneck stages</span>
<div class="b" style="left:742.40px;top:442.20px;width:2.40px;height:2.40px;background:#707070;border-radius:50%"></div>
<span class="t" style="left:752.30px;top:439px;font-size:8.3px;color:#777;letter-spacing:0.299px;">Throughput per stage</span>
<div class="b" style="left:742.40px;top:456.20px;width:2.40px;height:2.40px;background:#707070;border-radius:50%"></div>
<span class="t" style="left:752.30px;top:453px;font-size:8.3px;color:#777;letter-spacing:0.368px;">Live production status</span>
<div class="b" style="left:742.40px;top:470.20px;width:2.40px;height:2.40px;background:#707070;border-radius:50%"></div>
<span class="t" style="left:752.30px;top:467px;font-size:8.3px;color:#777;letter-spacing:0.372px;">Process sensors (program-specific)</span>
<div class="b" style="left:742.40px;top:484.20px;width:2.40px;height:2.40px;background:#707070;border-radius:50%"></div>
<span class="t" style="left:752.30px;top:481px;font-size:8.3px;color:#777;letter-spacing:0.334px;">Takt times — external measurement (program-specific)</span>
<div class="b" style="left:742.40px;top:498.20px;width:2.40px;height:2.40px;background:#707070;border-radius:50%"></div>
<span class="t" style="left:752.30px;top:495px;font-size:8.3px;color:#777;letter-spacing:0.271px;">Sensor <span style="font-size:1.3em;line-height:0;font-weight:700">↔</span> throughput correlation (LLM-analysed)</span>
</main>
</div></body></html>
